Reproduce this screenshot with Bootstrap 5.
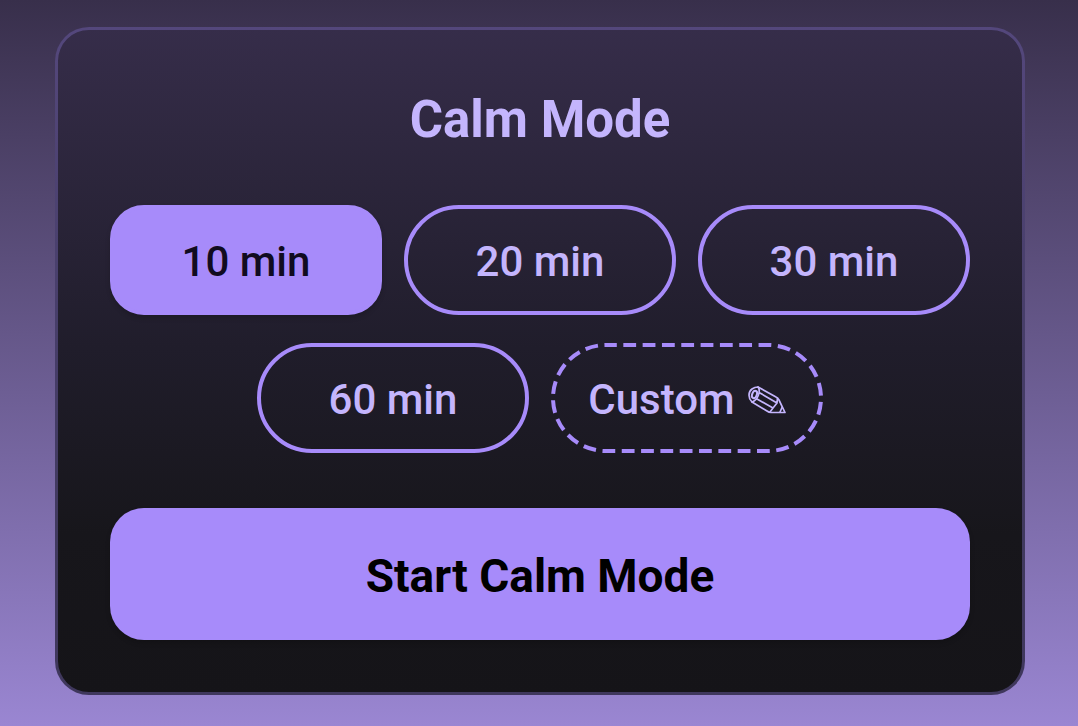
<!DOCTYPE html>
<html lang="en">
<head>
<meta charset="utf-8">
<meta name="viewport" content="width=device-width, initial-scale=1">
<title>Calm Mode</title>
<link href="https://cdn.jsdelivr.net/npm/bootstrap@5.3.0/dist/css/bootstrap.min.css" rel="stylesheet">
<style>
  body {
    font-family: Roboto, sans-serif;
    background: linear-gradient(180deg, #382f4b 0%, #9a86d2 100%) no-repeat;
  }
  .page { padding: 27px 53px 31px 55px; }
  .calm-card {
    border: 3px solid rgba(139, 118, 214, .36);
    border-radius: 34px;
    background: linear-gradient(180deg, #362d4a 0%, #201d2b 48%, #17161b 76%, #151418 100%) border-box;
    padding: 60px 52px 52px;
  }
  .calm-title { font-size: 51px; line-height: 60px; font-weight: 700; color: #c4b5fd; margin-bottom: 55px; }
  .times { column-gap: 22px; row-gap: 28px; margin-bottom: 55px; }
  .time-btn {
    --bs-btn-font-size: 42px;
    --bs-btn-line-height: 1.2;
    --bs-btn-font-weight: 500;
    --bs-btn-border-width: 4px;
    --bs-btn-border-color: #a78bfa;
    --bs-btn-color: #c4b5fd;
    --bs-btn-hover-color: #ddd6fe;
    --bs-btn-hover-border-color: #a78bfa;
    --bs-btn-active-color: #110b20;
    --bs-btn-active-bg: #a78bfa;
    --bs-btn-active-border-color: #a78bfa;
    --bs-btn-padding-x: 0;
    --bs-btn-padding-y: 0;
    width: calc((100% - 44px) / 3);
    min-width: 230px;
    height: 110px;
    padding-top: 4px;
    border-radius: 55px;
  }
  .time-btn.active { border-radius: 34px; box-shadow: 0 3px 5px rgba(0, 0, 0, .16); }
  .custom-btn { border-color: transparent; gap: 13px; }
  .dashes { top: -4px; left: -4px; width: calc(100% + 8px); height: calc(100% + 8px); overflow: visible; }
  .dashes rect { x: 2px; y: 2px; width: calc(100% - 4px); height: calc(100% - 4px); }
  .start-btn {
    --bs-btn-font-size: 46px;
    --bs-btn-font-weight: 700;
    --bs-btn-color: #000;
    --bs-btn-bg: #a78bfa;
    --bs-btn-hover-bg: #b49dfb;
    --bs-btn-hover-color: #000;
    --bs-btn-border-width: 0;
    min-height: 132px;
    padding-top: 10px;
    border-radius: 34px;
    box-shadow: 0 3px 5px rgba(0, 0, 0, .16);
  }
</style>
</head>
<body class="min-vh-100">
<main class="page">
  <section class="calm-card" aria-labelledby="title">
    <h1 class="calm-title text-center" id="title">Calm Mode</h1>
    <div class="times d-flex flex-wrap justify-content-center">
      <button type="button" class="btn time-btn active" aria-pressed="true">10 min</button>
      <button type="button" class="btn time-btn">20 min</button>
      <button type="button" class="btn time-btn">30 min</button>
      <button type="button" class="btn time-btn">60 min</button>
      <button type="button" class="btn time-btn custom-btn position-relative d-flex align-items-center justify-content-center">
        <svg class="dashes position-absolute" aria-hidden="true"><rect rx="53" fill="none" stroke="#a78bfa" stroke-width="4" stroke-dasharray="12.8 6.52" stroke-dashoffset="2"/></svg>
        <span>Custom</span>
        <svg width="38" height="28" viewBox="0 0 38 28" fill="none" stroke="#c4b5fd" stroke-width="1.7" stroke-linejoin="round" stroke-linecap="round" aria-hidden="true">
          <path d="M10 1 L28 11 Q30 12 31 14 L37 26.500 L23 26.500 Q21 26.500 19 25 L4 16 C0 12 0 6 4 3 C6 1.500 8 1 10 1Z"/>
          <ellipse cx="6.500" cy="8.500" rx="2.300" ry="3.800" stroke-width="2" transform="rotate(22 6.500 8.500)"/>
          <path d="M10 1 C13 5 10 14 4 16 M12 7 L29 17 M9 13 L25 22 M29.500 12 L29 17 L25 22 L22 26 M34 21.500 L32 26"/>
        </svg>
      </button>
    </div>
    <button type="button" class="btn start-btn w-100">Start Calm Mode</button>
  </section>
</main>
<script src="https://cdn.jsdelivr.net/npm/bootstrap@5.3.0/dist/js/bootstrap.bundle.min.js"></script>
</body>
</html>
